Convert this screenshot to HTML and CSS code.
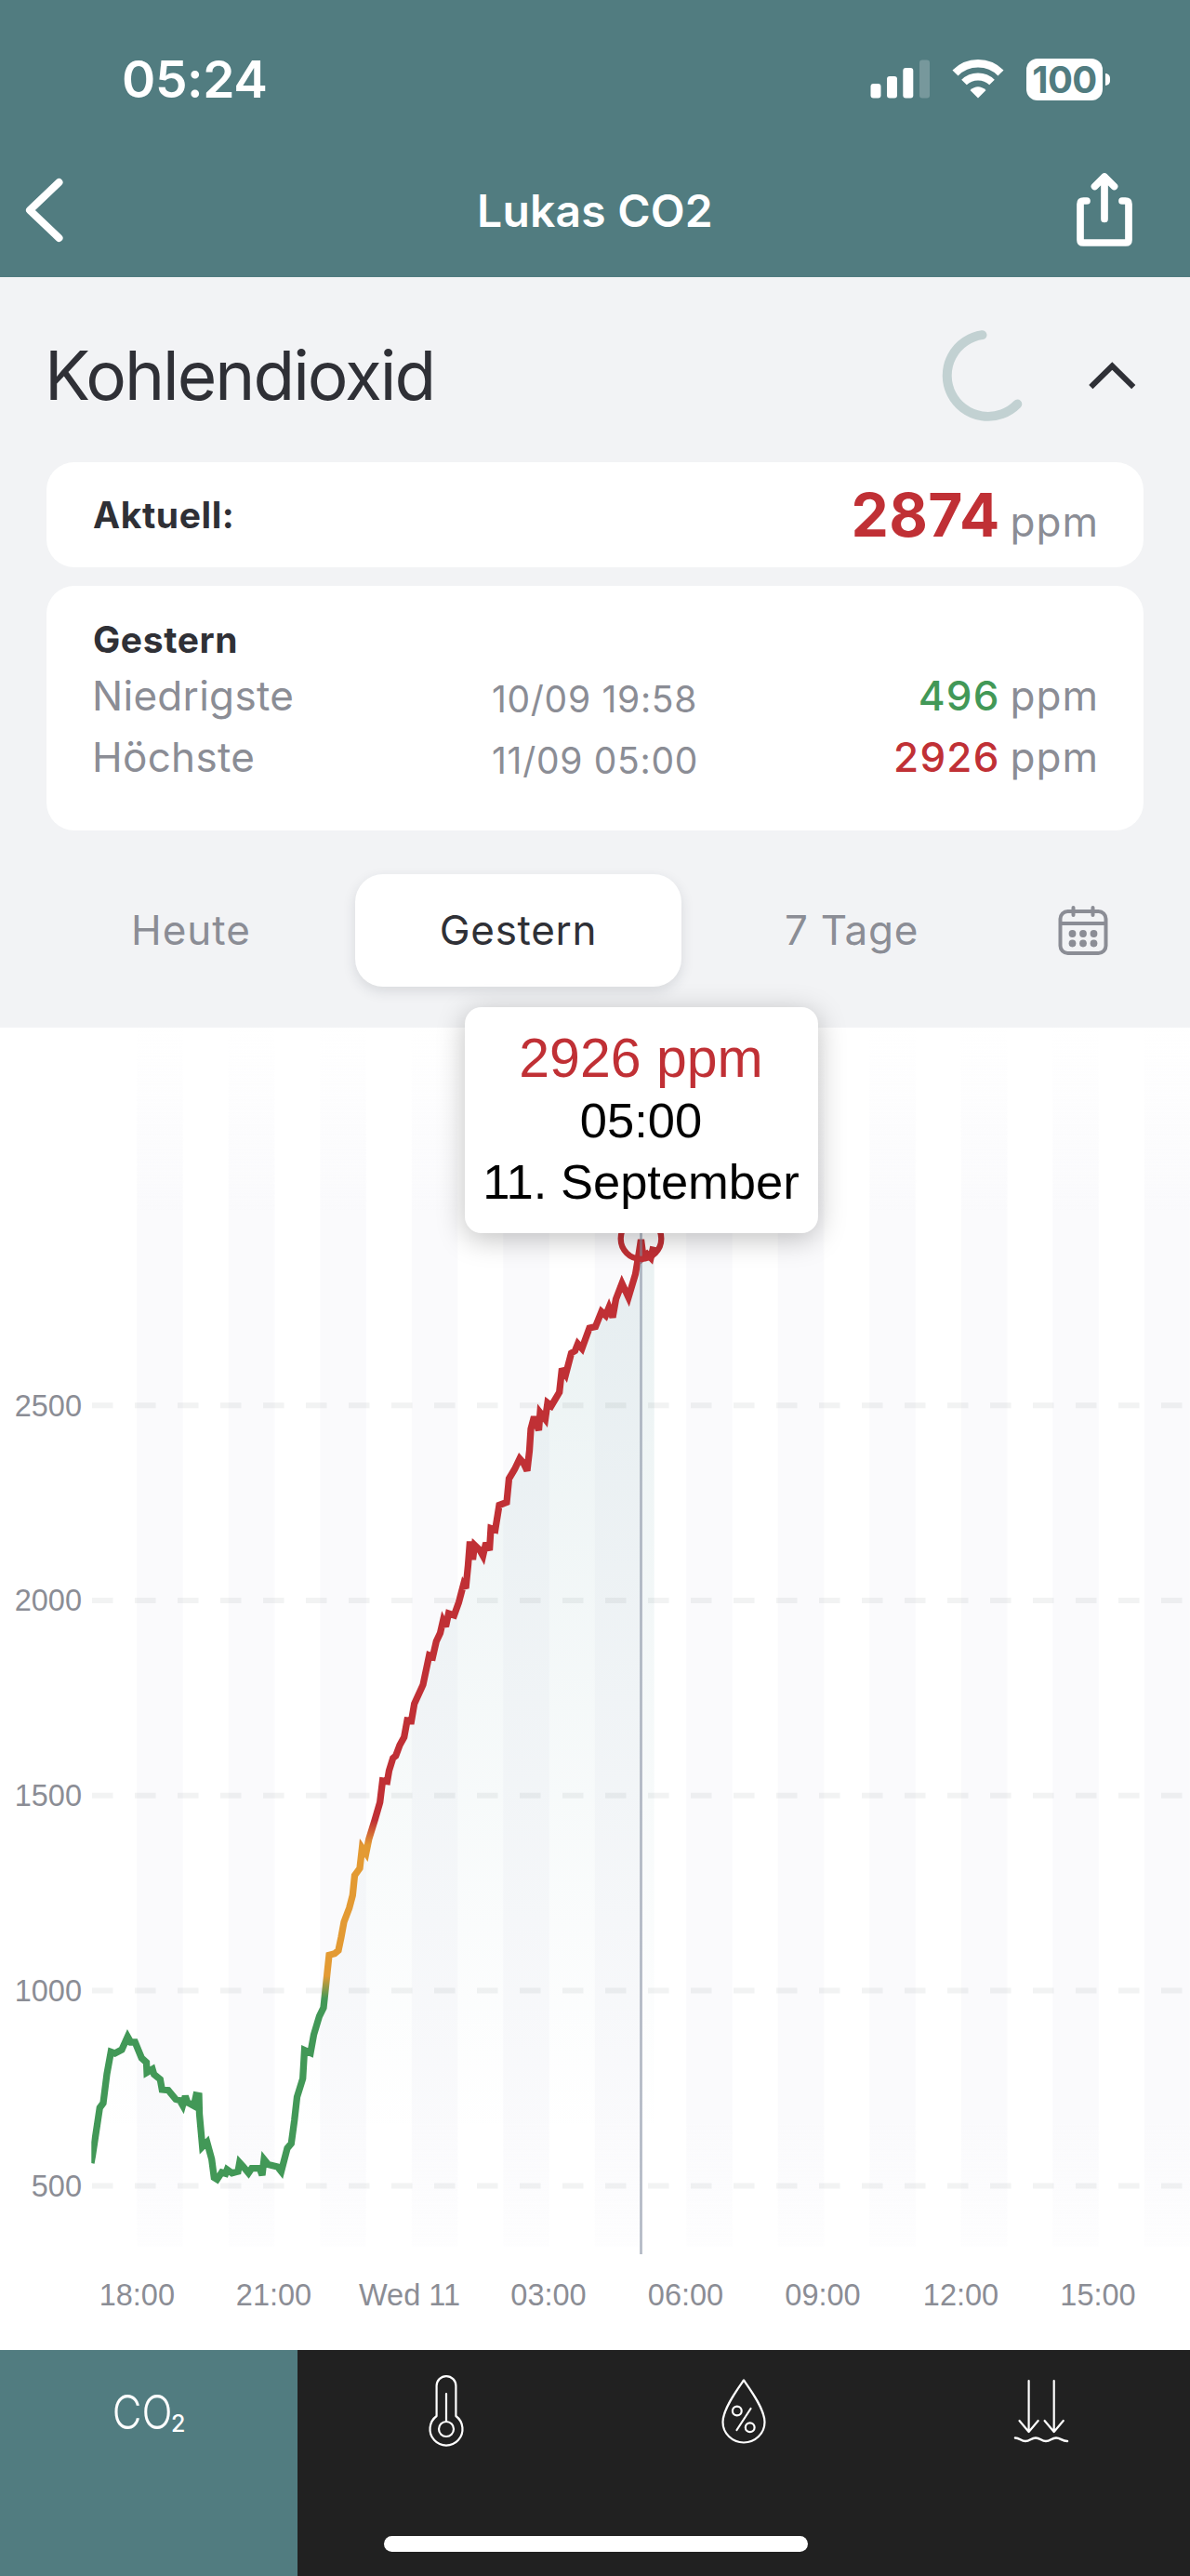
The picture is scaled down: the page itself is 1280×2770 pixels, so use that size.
FILE: index.html
```html
<!DOCTYPE html>
<html lang="de">
<head>
<meta charset="utf-8">
<title>Lukas CO2</title>
<link rel="stylesheet" href="styles.css">
</head>
<body>
<div class="screen">
  <header class="header">
    <div class="status">
      <span class="time">05:24</span>
      <div class="status-icons">
        <svg width="64" height="42" viewBox="936 64 64 42" fill="#fff"><rect x="936.5" y="90" width="11" height="15.5" rx="3"/><rect x="954" y="82" width="11" height="23.500" rx="3"/><rect x="971.3" y="73" width="11" height="32.500" rx="3"/><rect x="989" y="64.500" width="11" height="41" rx="3" opacity=".22"/></svg>
        <svg class="wifi" width="56" height="42" viewBox="0 0 56 42" fill="none" stroke="#fff"><path d="M3.500 14.500a34.500 34.500 0 0 1 49 0" stroke-width="8.500"/><path d="M13 24.500a21.500 21.500 0 0 1 30 0" stroke-width="8"/><path d="M28 41.500 19.500 33q8.500-7.500 17 0z" fill="#fff" stroke="none"/></svg>
        <div class="battery"><span class="level">100</span><i class="tip"></i></div>
      </div>
    </div>
    <nav class="nav">
      <svg width="44" height="72" viewBox="25 190 44 72"><path d="M63.500 196 32 226l31.500 30" fill="none" stroke="#fff" stroke-width="8" stroke-linecap="round" stroke-linejoin="round"/></svg>
      <h1 class="title">Lukas CO2</h1>
      <svg class="share" width="62" height="82" viewBox="1157 186 62 82" fill="none" stroke="#fff" stroke-width="7.700" stroke-linecap="round" stroke-linejoin="round"><path d="M1169 217h-3.500q-3.500 0-3.500 3.500v38.500q0 3 3 3h46q3 0 3-3v-38.500q0-3.500-3.500-3.500h-3.500M1188 191v45.500M1177.500 201.500l10.500-10.500 10.500 10.500"/></svg>
    </nav>
  </header>
  <section class="panel">
    <div class="heading">
      <h2 class="metric">Kohlendioxid</h2>
      <svg class="spinner" width="100" height="100" viewBox="1013 353 100 100.500" overflow="visible"><path d="M1056.500 360.200A44.300 44.300 0 1 0 1094.500 435" fill="none" stroke="#c2d1d2" stroke-width="10" stroke-linecap="round"/></svg>
      <svg width="52" height="32" viewBox="1170 387 52 32"><path d="M1175.500 414l20.800-20.500 20.800 20.500" fill="none" stroke="#2f3036" stroke-width="6" stroke-linecap="square"/></svg>
    </div>
    <div class="card current">
      <span class="label">Aktuell:</span>
      <span><b class="big bad">2874</b><span class="unit">ppm</span></span>
    </div>
    <div class="card range">
      <div class="label day">Gestern</div>
      <div class="row"><span class="name">Niedrigste</span><span class="when">10/09 19:58</span><span class="value"><b class="num good">496</b><span class="unit">ppm</span></span></div>
      <div class="row"><span class="name">Höchste</span><span class="when">11/09 05:00</span><span class="value"><b class="num bad">2926</b><span class="unit">ppm</span></span></div>
    </div>
    <div class="tabs">
      <span class="tab first">Heute</span>
      <span class="tab active">Gestern</span>
      <span class="tab">7 Tage</span>
      <svg class="cal" width="54" height="54" viewBox="0 0 54 54" fill="none" stroke="#8b8d95" stroke-width="4" stroke-linecap="round"><rect x="2.500" y="7" width="49" height="45" rx="8"/><path d="M3 20h48M16.500 3v8M37.500 3v8"/><g fill="#8b8d95" stroke="none"><circle cx="15.500" cy="31" r="3.900"/><circle cx="27" cy="31" r="3.900"/><circle cx="38.500" cy="31" r="3.900"/><circle cx="15.500" cy="41.500" r="3.900"/><circle cx="27" cy="41.500" r="3.900"/><circle cx="38.500" cy="41.500" r="3.900"/></g></svg>
    </div>
  </section>
  <section class="chart">
    <svg width="1280" height="1422" viewBox="0 1105 1280 1422">
      <defs>
        <linearGradient id="band" gradientUnits="userSpaceOnUse" x1="0" y1="1105" x2="0" y2="2415"><stop offset="0" stop-color="#fafafc" stop-opacity="0"/><stop offset=".15" stop-color="#fafafc"/><stop offset=".9" stop-color="#fafafc"/><stop offset="1" stop-color="#fafafc" stop-opacity=".3"/></linearGradient>
        <pattern id="bands" patternUnits="userSpaceOnUse" x="147.300" y="1105" width="98.500" height="1312"><rect width="49.500" height="1312" fill="#fff"/></pattern>
        <mask id="stripes"><rect x="147" y="1105" width="1133" height="1311" fill="url(#bands)"/></mask>
        <linearGradient id="area" gradientUnits="userSpaceOnUse" x1="0" y1="1330" x2="0" y2="2300"><stop offset="0" stop-color="#4f9096" stop-opacity=".12"/><stop offset="1" stop-color="#4f9096" stop-opacity="0"/></linearGradient>
        <linearGradient id="level" gradientUnits="userSpaceOnUse" x1="0" y1="1940" x2="0" y2="2160"><stop offset="0" stop-color="#c03035"/><stop offset=".08" stop-color="#c03035"/><stop offset=".2" stop-color="#e39a33"/><stop offset=".84" stop-color="#e39a33"/><stop offset=".95" stop-color="#429857"/><stop offset="1" stop-color="#429857"/></linearGradient>
        <clipPath id="plot"><rect x="98.300" y="1105" width="610" height="1312"/></clipPath>
      </defs>
      <rect x="147" y="1105" width="1133" height="1311" fill="url(#band)" mask="url(#stripes)"/>
      <path id="fill" fill="url(#area)" clip-path="url(#plot)"/>
      <path d="M99 1511.200H1280M99 1721H1280M99 1930.700H1280M99 2140.500H1280M99 2350.500H1280" stroke="#49505c" stroke-opacity=".07" stroke-width="6" stroke-dasharray="22.500 23.500"/>
      <path id="line" fill="none" stroke="url(#level)" stroke-width="7.300" stroke-miterlimit="3" clip-path="url(#plot)"/>
      <path d="M689.500 1326V2424" stroke="#8791a3" stroke-opacity=".62" stroke-width="2.800"/>
      <circle cx="689.500" cy="1332" r="21.800" fill="none" stroke="#c03035" stroke-width="6.300"/>
      <g class="axis" text-anchor="end"><text x="88" y="1522.500">2500</text><text x="88" y="1732.300">2000</text><text x="88" y="1942">1500</text><text x="88" y="2152">1000</text><text x="88" y="2362">500</text></g>
      <g class="axis" text-anchor="middle"><text x="147.300" y="2479">18:00</text><text x="294.500" y="2479">21:00</text><text x="440.500" y="2479">Wed 11</text><text x="590" y="2479">03:00</text><text x="737.500" y="2479">06:00</text><text x="885" y="2479">09:00</text><text x="1033.500" y="2479">12:00</text><text x="1181" y="2479">15:00</text></g>
    </svg>
    <div class="tooltip"><div class="reading">2926 ppm</div><div>05:00</div><div>11. September</div></div>
  </section>
  <footer class="tabbar">
    <div class="item selected"><span class="co">CO</span><span class="two">2</span></div>
    <div class="item"><svg width="40" height="80" viewBox="460 2553 40 80"><path d="M469.600 2598V2565.500a10.400 10.400 0 0 1 20.800 0V2598a17.500 17.500 0 1 1-20.800 0zM480 2574v30"/><circle cx="480" cy="2612" r="8"/></svg></div>
    <div class="item"><svg width="50" height="80" viewBox="775 2553 50 80"><path d="M800 2559.500c7 10 22.500 31 22.500 45a22.500 22 0 0 1-45 0c0-14 15.500-35 22.500-45zM807.500 2590 792.500 2613"/><circle cx="792.800" cy="2592.500" r="4.900"/><circle cx="806.700" cy="2610.200" r="4.900"/></svg></div>
    <div class="item"><svg width="60" height="80" viewBox="1090 2553 60 80"><path d="M1106.600 2560v54M1096.500 2603l10.100 12 10.100-12M1133.700 2560v54M1123.600 2603l10.100 12 10.100-12"/><path stroke-width="2.600" d="M1092 2621.500c5 0 6 3.500 11 3.500s6-3.500 11-3.500 6 3.500 11 3.500 6-3.500 11-3.500 6 3.500 12 3.500"/></svg></div>
    <div class="home"></div>
  </footer>
</div>
<script src="chart.js"></script>
</body>
</html>
```
FILE: chart.js
```js
// Reading positions along the curve, in chart coordinates.
const points = [
  [98,2326],[99.5,2318],[103.300,2293],[107.300,2266.500],[111,2261.500],[115,2230],[119.300,2206.500],[123.500,2208],[131,2204],[137.300,2190],[140.700,2196],[145.300,2196],[152.300,2213],[157.500,2217.700],[158,2228.500],[164,2225],[165.700,2230.700],[172.300,2236],[174.300,2247],[181,2247.700],[189,2257.300],[193.300,2258.500],[196.500,2264],[199.300,2254],[201.700,2260.700],[208.500,2264.500],[211,2253],[214,2253.500],[214.500,2273],[217.700,2308.500],[222.700,2303.500],[227.700,2321.700],[230.300,2341.500],[233.500,2343.500],[238.500,2336],[242.700,2337.300],[244.300,2333],[249.500,2336.700],[256,2335],[257.700,2325.500],[261.700,2330],[267.300,2336.700],[270.700,2331.700],[279.300,2331.700],[282,2339],[284,2322],[288.500,2327.500],[298.500,2330],[302.500,2335],[309,2310],[313.300,2305],[316.700,2280],[319.500,2255],[325.700,2235],[327.500,2204.500],[334,2207.500],[337.500,2188],[343.500,2168],[348,2159],
  [349.300,2146.700],[354,2102.300],[360,2100.700],[364,2097.300],[367,2083],[370,2066.700],[375.700,2051.700],[379.300,2038],[381.500,2016.700],[387,2009],[389.500,1987],[393.700,1993],[396.700,1978],[403.300,1956.700],[408.700,1938],[411.500,1915],[416.500,1915.700],[418.500,1904],[422.700,1890.500],[425.700,1888],[430,1876.500],
  [434.700,1868],[438,1850],[442.500,1850.500],[445.700,1832],[455,1811.700],[461.700,1780],[465.500,1781.500],[469.300,1765],[473.500,1756],[476.500,1743],[479.500,1749],[482.500,1735],[488.500,1737],[493.500,1723],[498.500,1704],[501,1708],[503.500,1683],[505.500,1657.500],[508.500,1677],[510.500,1661.500],[516,1666.700],[519.500,1673],[522.700,1659],[526.500,1667],[528,1643.500],[532.700,1645],[537,1618.500],[545,1615.500],[547.500,1590],[553.500,1580],[559,1568.500],[563,1573],[567,1581.500],[569.500,1560],[571,1536.700],[574.500,1523.500],[579.500,1538],[581,1519],[586.500,1526],[589,1508.500],[593,1511.700],[601.700,1497],[604.500,1471.700],[608.500,1478],[614.500,1455],[618.500,1452.500],[621.500,1445],[626,1450],[634,1428],[640.500,1426.500],[647,1410.500],[651.500,1414.500],[655,1406],[659,1416.500],[662.500,1397],[669,1380],[676,1395],[683.500,1370],[687.500,1346],[689.500,1333],[692,1352],[696,1348.500],[700,1352.500],[702,1344],[706.500,1345]
];
const curve = 'M' + points.map(p => p.join(' ')).join('L');
document.getElementById('line').setAttribute('d', curve);
const inside = points.filter(p => p[0] < 704);
document.getElementById('fill').setAttribute('d', 'M' + inside.map(p => p.join(' ')).join('L') + 'L703.700 1346V2417H98Z');
```
FILE: styles.css
```css
* { box-sizing: border-box; }
body { margin: 0; background: #fff; font-family: Inter, "Liberation Sans", sans-serif; }
h1, h2 { margin: 0; }
svg { display: block; }
.screen { width: 1280px; height: 2770px; overflow: hidden; }

.header { height: 298px; background: #517c80; color: #fff; }
.status { height: 170px; display: flex; align-items: center; justify-content: space-between; padding: 0 94px 0 131px; }
.time { font-size: 55px; font-weight: 600; letter-spacing: -.4px; }
.status-icons { display: flex; align-items: center; }
.wifi { margin-left: 24px; }
.battery { position: relative; width: 82px; height: 45px; margin-left: 24px; border-radius: 12px; background: #fff; color: #517c80; display: flex; align-items: center; justify-content: center; }
.level { font-size: 40px; font-weight: 700; line-height: 45px; letter-spacing: -.6px; }
.tip { position: absolute; left: 85px; top: 16px; width: 5px; height: 13px; border-radius: 0 6px 6px 0; background: #fff; }
.nav { height: 112px; display: grid; grid-template-columns: 1fr auto 1fr; align-items: center; padding: 0 25px; }
.title { font-size: 48px; font-weight: 600; letter-spacing: .2px; }
.share { justify-self: end; margin-right: 36px; }

.panel { height: 807px; padding: 11px 50px 0; background: #f2f3f5; }
.heading { height: 188px; display: flex; align-items: center; padding-right: 8px; }
.metric { font-size: 73px; font-weight: 400; letter-spacing: -2px; margin-left: -2px; color: #2f3036; }
.spinner { margin-left: auto; margin-right: 57px; }
.card { background: #fff; border-radius: 30px; padding: 0 50px; }
.current { height: 113px; display: flex; align-items: center; justify-content: space-between; }
.label { font-size: 39px; font-weight: 700; letter-spacing: .6px; color: #2f3036; }
.big { font-size: 64px; font-weight: 700; letter-spacing: .3px; }
.bad { color: #c03035; }
.good { color: #429857; }
.unit { font-size: 44px; letter-spacing: 1px; color: #8b8d95; margin: 0 -2px 0 11px; }
.range { height: 263px; margin-top: 20px; padding-top: 31px; }
.day { line-height: 54px; }
.row { display: grid; grid-template-columns: 430px 1fr auto; align-items: center; height: 66px; line-height: 66px; color: #8b8d95; }
.name { font-size: 44px; letter-spacing: .3px; margin-left: -1px; }
.when { font-size: 39px; letter-spacing: .7px; margin: 4px 0 -4px -1px; }
.value { display: flex; }
.num { font-size: 44px; font-weight: 500; letter-spacing: 1.2px; }
.tabs { display: grid; grid-template-columns: 351px 351px 366px 132px; margin: 46px -50px 0 -19px; height: 122px; align-items: center; text-align: center; }
.tab { font-size: 44px; line-height: 121px; letter-spacing: .7px; color: #8b8d95; }
.first { letter-spacing: 1px; padding-right: 2px; }
.active { color: #2f3036; background: #fff; border-radius: 30px; box-shadow: 0 5px 14px rgba(40,45,60,.13); }
.cal { justify-self: center; }

.chart { position: relative; height: 1422px; }
.axis { font: 32.500px "Liberation Sans", Arial, sans-serif; fill: #8b8d95; }
.tooltip { position: absolute; left: 499.500px; top: -22px; width: 380px; height: 243px; padding-top: 21px; border-radius: 18px; background: #fff; box-shadow: 0 6px 30px rgba(0,0,0,.25); text-align: center; font: 52.500px/66px "Liberation Sans", Arial, sans-serif; color: #000; }
.reading { font-size: 59px; line-height: 68px; color: #c03035; }

.tabbar { position: relative; height: 243px; display: grid; grid-template-columns: repeat(4, 320px); background: #212121; color: #fff; }
.item { display: flex; justify-content: center; padding-top: 26px; }
.item svg { fill: none; stroke: #fff; stroke-width: 2.200; stroke-linecap: round; stroke-linejoin: round; }
.selected { background: #517c80; }
.co { font-size: 50px; font-weight: 300; line-height: 83px; transform: scaleX(.87); }
.two { font-size: 25px; font-weight: 500; line-height: 107px; margin: 0 5px 0 -6px; }
.home { position: absolute; left: 413px; bottom: 26px; width: 456px; height: 17px; border-radius: 9px; background: #fff; }
```
